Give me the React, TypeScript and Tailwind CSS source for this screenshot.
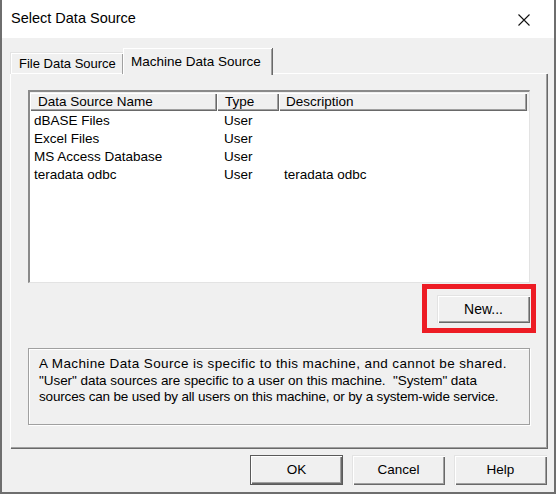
import React from 'react';

const raised =
  'shadow-[inset_1px_1px_0_#ffffff,inset_-1px_-1px_0_#696969,inset_-2px_-2px_0_#a0a0a0]';

const rows = [
  { name: 'dBASE Files', type: 'User', desc: '' },
  { name: 'Excel Files', type: 'User', desc: '' },
  { name: 'MS Access Database', type: 'User', desc: '' },
  { name: 'teradata odbc', type: 'User', desc: 'teradata odbc' },
];

function Button({ label, isDefault }: { label: string; isDefault?: boolean }) {
  return (
    <button
      type="button"
      className={`h-[30px] w-[93px] bg-[#f0f0f0] text-[13.5px] text-black ${
        isDefault
          ? 'border border-[#5a5a5a] shadow-[inset_1px_1px_0_#ffffff,inset_-1px_-1px_0_#696969,inset_-2px_-2px_0_#a0a0a0]'
          : 'shadow-[inset_1px_1px_0_#e3e3e3,inset_2px_2px_0_#ffffff,inset_-1px_-1px_0_#696969,inset_-2px_-2px_0_#a0a0a0]'
      }`}
    >
      {label}
    </button>
  );
}

export default function App() {
  return (
    <div
      className="flex h-[494px] w-[556px] flex-col border-l-2 border-r-2 border-b-2 border-[#6e6e6e] bg-[#f0f0f0] text-black"
      style={{ fontFamily: '"Liberation Sans", Arial, sans-serif' }}
    >
      {/* title bar */}
      <div className="flex h-[38px] items-center justify-between bg-white pl-[9px] pr-[24px]">
        <span className="text-[14.5px]">Select Data Source</span>
        <svg width="12" height="12" viewBox="0 0 12 12" className="mt-[1px]">
          <path d="M0.5 0.5 L11.5 11.5 M11.5 0.5 L0.5 11.5" stroke="#111" strokeWidth="1.1" />
        </svg>
      </div>

      <div className="flex flex-1 flex-col pl-[8px] pr-[7px] pt-[10px]">
        {/* tabs */}
        <div className="relative z-10 flex h-[25px] items-end">
          <div className="mb-[-1px] flex h-[22px] w-[113px] items-center pl-[8px] text-[13px] shadow-[inset_1px_1px_0_#ffffff,inset_-1px_0_0_#a0a0a0] border-t border-l border-[#e3e3e3]">
            File Data Source
          </div>
          <div className="mb-[-2px] flex h-[27px] w-[149px] items-start bg-[#f0f0f0] pl-[7px] pt-[3px] text-[13.5px] border-t border-l border-white shadow-[inset_-1px_0_0_#a0a0a0,1px_0_0_#696969]">
            Machine Data Source
          </div>
        </div>

        {/* tab panel */}
        <div className="flex h-[375px] flex-col border-t border-l border-white shadow-[inset_-1px_-1px_0_#a0a0a0,1px_1px_0_#696969] px-[17px] pt-[16px]">
          {/* list view */}
          <div className="flex h-[193px] w-[502px] flex-col bg-white border-t-2 border-l-2 border-t-[#8a8a8a] border-l-[#8a8a8a] border-b border-r border-b-[#e3e3e3] border-r-[#e3e3e3] text-[13.5px]">
            <div className="flex h-[19px] shrink-0 bg-[#f0f0f0] pt-[1px]">
              <div className={`flex w-[187px] items-center pl-[8px] ${raised}`}>Data Source Name</div>
              <div className={`flex w-[62px] items-center pl-[8px] ${raised}`}>Type</div>
              <div className={`flex w-[248px] items-center pl-[7px] ${raised}`}>Description</div>
            </div>
            <div className="flex flex-col pt-[1px]">
              {rows.map(r => (
                <div key={r.name} className="flex h-[18px] items-center leading-[18px]">
                  <div className="w-[187px] pl-[4px]">{r.name}</div>
                  <div className="w-[62px] pl-[7px]">{r.type}</div>
                  <div className="w-[248px] pl-[5px]">{r.desc}</div>
                </div>
              ))}
            </div>
          </div>

          {/* new button */}
          <div className="flex w-[502px] justify-end pt-[12px]">
            <div className="relative">
              <button
                type="button"
                className="h-[28px] w-[93px] bg-[#f0f0f0] text-[14px] shadow-[inset_1px_1px_0_#e3e3e3,inset_2px_2px_0_#ffffff,inset_-1px_-1px_0_#696969,inset_-2px_-2px_0_#a0a0a0]"
              >
                New...
              </button>
              <div className="pointer-events-none absolute -left-[15px] -right-[6px] -top-[11px] -bottom-[10px] border-[5px] border-[#ed1c24]" />
            </div>
          </div>

          {/* description group */}
          <div className="mt-[25px] h-[77px] w-[502px] whitespace-nowrap border border-[#a0a0a0] shadow-[1px_1px_0_#ffffff,inset_1px_1px_0_#ffffff] px-[10px] pt-[7px] text-[13.5px] leading-[16.5px]">
            <div className="tracking-[0.38px]">A Machine Data Source is specific to this machine, and cannot be shared.</div>
            <div className="tracking-[-0.05px]">"User" data sources are specific to a user on this machine.&nbsp; "System" data</div>
            <div className="tracking-[-0.17px]">sources can be used by all users on this machine, or by a system-wide service.</div>
          </div>
        </div>

        {/* bottom buttons */}
        <div className="flex justify-end gap-[9px] pr-[0px] pt-[7px]">
          <Button label="OK" isDefault />
          <Button label="Cancel" />
          <Button label="Help" />
        </div>
      </div>
    </div>
  );
}
